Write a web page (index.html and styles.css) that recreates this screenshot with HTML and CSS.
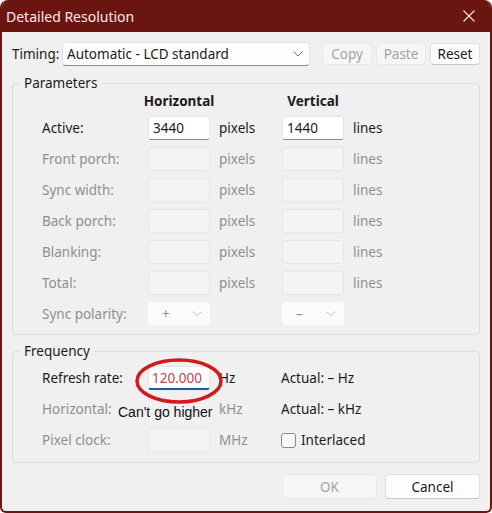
FILE: index.html
```html
<!DOCTYPE html>
<html lang="en">
<head>
    <meta charset="UTF-8">
    <title>Detailed Resolution</title>
    <link rel="stylesheet" href="styles.css">
</head>
<body>
    <div class="window">
        <div class="titlebar">
            <span class="title">Detailed Resolution</span>
            <svg class="close" width="12" height="12" viewBox="0 0 12 12">
                <path d="M0.5 0.5 L11.5 11.5 M11.5 0.5 L0.5 11.5" stroke="#f3e6e4" stroke-width="1.2" fill="none"/>
            </svg>
        </div>

        <div class="content">
            <div class="timing-row">
                <span class="label">Timing:</span>
                <div class="select timing-select">
                    <span>Automatic - LCD standard</span>
                    <svg class="chevron" width="10" height="6" viewBox="0 0 10 6"><path d="M0.5 0.5 L5 5 L9.5 0.5" stroke="#6a6a6a" fill="none"/></svg>
                </div>
                <button class="btn small" disabled>Copy</button>
                <button class="btn small" disabled>Paste</button>
                <button class="btn small">Reset</button>
            </div>

            <fieldset class="group params">
                <legend>Parameters</legend>
                <div class="grid">
                    <span></span><span class="colhead">Horizontal</span><span></span><span class="colhead">Vertical</span><span></span>

                    <span class="label">Active:</span>
                    <div class="field">3440</div>
                    <span class="unit">pixels</span>
                    <div class="field">1440</div>
                    <span class="unit">lines</span>

                    <span class="label off">Front porch:</span>
                    <div class="field off"></div>
                    <span class="unit off">pixels</span>
                    <div class="field off"></div>
                    <span class="unit off">lines</span>

                    <span class="label off">Sync width:</span>
                    <div class="field off"></div>
                    <span class="unit off">pixels</span>
                    <div class="field off"></div>
                    <span class="unit off">lines</span>

                    <span class="label off">Back porch:</span>
                    <div class="field off"></div>
                    <span class="unit off">pixels</span>
                    <div class="field off"></div>
                    <span class="unit off">lines</span>

                    <span class="label off">Blanking:</span>
                    <div class="field off"></div>
                    <span class="unit off">pixels</span>
                    <div class="field off"></div>
                    <span class="unit off">lines</span>

                    <span class="label off">Total:</span>
                    <div class="field off"></div>
                    <span class="unit off">pixels</span>
                    <div class="field off"></div>
                    <span class="unit off">lines</span>

                    <span class="label off">Sync polarity:</span>
                    <div class="select mini off">
                        <span>+</span>
                        <svg class="chevron" width="10" height="6" viewBox="0 0 10 6"><path d="M0.5 0.5 L5 5 L9.5 0.5" stroke="#c4c4c4" fill="none"/></svg>
                    </div>
                    <span></span>
                    <div class="select mini off">
                        <span>&ndash;</span>
                        <svg class="chevron" width="10" height="6" viewBox="0 0 10 6"><path d="M0.5 0.5 L5 5 L9.5 0.5" stroke="#c4c4c4" fill="none"/></svg>
                    </div>
                    <span></span>
                </div>
            </fieldset>

            <fieldset class="group freq">
                <legend>Frequency</legend>
                <div class="grid">
                    <span class="label">Refresh rate:</span>
                    <div class="field focus">120.000</div>
                    <span class="unit">Hz</span>
                    <span class="actual">Actual: &ndash; Hz</span>

                    <span class="label off">Horizontal:</span>
                    <div class="field off hidden"></div>
                    <span class="unit off">kHz</span>
                    <span class="actual">Actual: &ndash; kHz</span>

                    <span class="label off">Pixel clock:</span>
                    <div class="field off"></div>
                    <span class="unit off">MHz</span>
                    <label class="check"><span class="box"></span>Interlaced</label>
                </div>

                <svg class="mark" width="96" height="54" viewBox="0 0 96 54">
                    <ellipse cx="48" cy="27" rx="42" ry="21" fill="none" stroke="#cf1b1b" stroke-width="3.5"/>
                </svg>
                <span class="note">Can't go higher</span>
            </fieldset>

            <div class="footer">
                <button class="btn wide" disabled>OK</button>
                <button class="btn wide">Cancel</button>
            </div>
        </div>
    </div>
</body>
</html>
```

FILE: styles.css
```css
:root {
    --title-red: #6b1511;
    --face: #f0f0f0;
    --ink: #1b1b1b;
    --muted: #8f8f8f;
    --line: #dcdcdc;
}

* {
    margin: 0;
    padding: 0;
    box-sizing: border-box;
}

body {
    background: #ffffff;
    font-family: "Noto Sans", "Open Sans", sans-serif;
    font-size: 13.5px;
    color: var(--ink);
}

.window {
    width: 492px;
    height: 513px;
    border: 2px solid var(--title-red);
    border-top: none;
    border-radius: 8px 8px 6px 6px;
    background: var(--face);
    overflow: hidden;
}

.titlebar {
    height: 32px;
    background: var(--title-red);
    display: flex;
    align-items: center;
    justify-content: space-between;
    padding: 0 15px 0 4px;
    color: #f5e9e7;
}

.title {
    font-size: 14px;
}

.content {
    padding: 10px 9px 0 9px;
}

.timing-row {
    display: flex;
    align-items: center;
    height: 24px;
}

.timing-row > * {
    flex: none;
}

.timing-row .label {
    width: 51px;
    padding-left: 1px;
}

.select {
    display: flex;
    align-items: center;
    justify-content: space-between;
    background: #fdfdfd;
    border: 1px solid #e3e3e3;
    border-bottom-color: #8c8c8c;
    border-radius: 4px;
    padding: 0 6px 0 4px;
}

.timing-select {
    width: 248px;
    height: 24px;
    margin-right: 12px;
}

.btn {
    font-family: inherit;
    font-size: 13.5px;
    color: var(--ink);
    background: #fdfdfd;
    border: 1px solid #dedede;
    border-bottom-color: #c8c8c8;
    border-radius: 4px;
}

.btn:disabled {
    color: #a3a3a3;
    background: #f6f6f6;
    border-color: #e8e8e8;
}

.btn.small {
    width: 50px;
    height: 22px;
    margin-right: 4px;
}

.group {
    border: 1px solid var(--line);
    border-radius: 4px;
    margin: 7px 1px 0 1px;
    padding: 0;
    position: relative;
}

.group legend {
    margin-left: 7px;
    padding: 0 4px;
    line-height: 20px;
}

.params .grid {
    padding: 0 0 9px 29px;
}

.freq {
    margin-top: 6px;
}

.freq .grid {
    grid-template-columns: 106px 62px 71px 1fr;
    padding: 5px 0 10px 29px;
}

.grid {
    display: grid;
    grid-template-columns: 106px 62px 72px 62px 1fr;
    row-gap: 7px;
    align-items: center;
}

.colhead {
    font-weight: bold;
    text-align: center;
    white-space: nowrap;
    height: 16px;
    line-height: 16px;
    margin: 0 -20px;
}

.label.off,
.unit.off {
    color: var(--muted);
}

.unit {
    padding-left: 9px;
}

.field {
    height: 24px;
    line-height: 22px;
    padding-left: 4px;
    background: #ffffff;
    border: 1px solid #e4e4e4;
    border-bottom-color: #878787;
    border-radius: 3px;
}

.field.off {
    background: #f4f4f4;
    border-color: #e6e6e6;
}

.field.hidden {
    visibility: hidden;
}

.field.focus {
    color: #c0434d;
    padding-left: 3px;
    border-bottom: 2px solid #1d5aa3;
}

.select.mini {
    height: 23px;
    border: none;
    background: #fbfbfb;
    padding: 0 8px 0 14px;
    color: var(--muted);
}

.actual {
    white-space: nowrap;
}

.check {
    display: flex;
    align-items: center;
    gap: 5px;
}

.box {
    width: 15px;
    height: 15px;
    border: 1px solid #8a8a8a;
    border-radius: 3px;
    background: #f7f7f7;
}

.mark {
    position: absolute;
    left: 118px;
    top: -7px;
}

.note {
    position: absolute;
    left: 105px;
    top: 43px;
    font-family: "Liberation Sans", Arial, sans-serif;
    font-size: 14px;
    color: #111111;
}

.footer {
    display: flex;
    justify-content: flex-end;
    gap: 8px;
    margin-top: 11px;
    padding-right: 1px;
}

.btn.wide {
    width: 95px;
    height: 25px;
}
```
